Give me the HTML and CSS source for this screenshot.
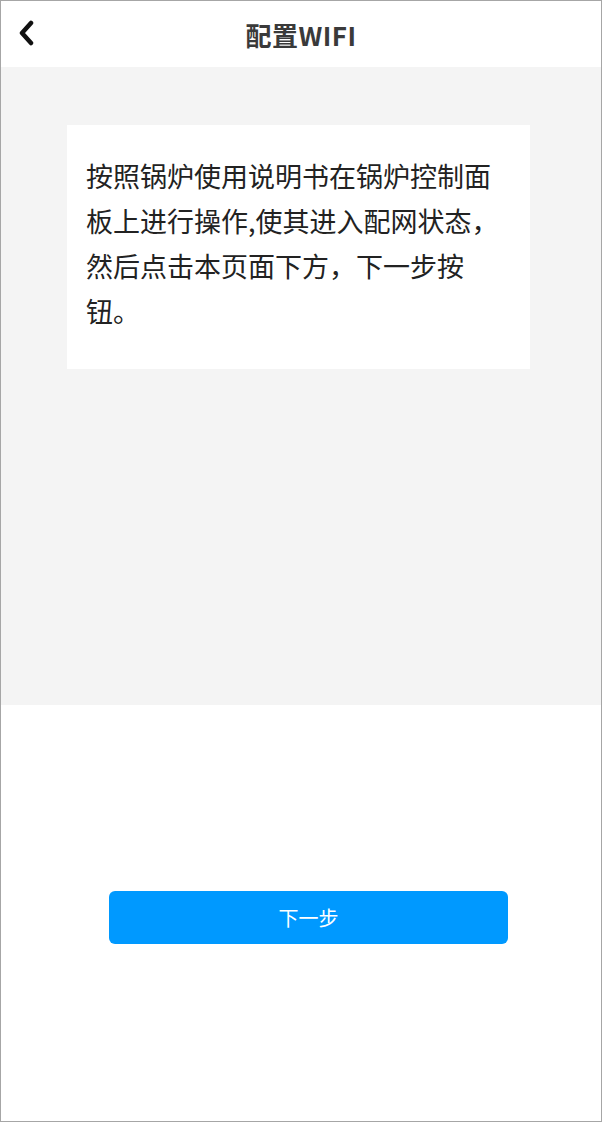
FILE: index.html
```html
<!DOCTYPE html>
<html lang="zh-CN">
<head>
  <meta charset="UTF-8"/>
  <meta name="viewport" content="width=device-width, initial-scale=1.0"/>
  <title>配置WIFI</title>
  <link rel="stylesheet" href="styles.css">
</head>
<body>
  <div class="page">
    <div class="header">
      <a class="back" href="#">
        <svg width="16" height="26" viewBox="0 0 16 26"><path d="M13 3 L4 13 L13 23" fill="none" stroke="#111" stroke-width="4.5" stroke-linecap="round" stroke-linejoin="round"/></svg>
      </a>
      <h1>配置WIFI</h1>
    </div>

    <div class="main">
      <div class="card">
        <p>按照锅炉使用说明书在锅炉控制面<br>板上进行操作,使其进入配网状态，<br>然后点击本页面下方，下一步按<br>钮。</p>
      </div>
    </div>

    <div class="footer">
      <button id="next">下一步</button>
    </div>
  </div>
</body>
</html>
```

FILE: styles.css
```css
body { margin:0; background:#fff; font-family:"Noto Sans CJK SC", "Microsoft YaHei", sans-serif; }
.page { box-sizing:border-box; width:602px; height:1122px; border:1px solid #a6a6a6; overflow:hidden; }
.header { position:relative; height:66px; display:flex; align-items:center; justify-content:center; background:#fff; }
.back { position:absolute; left:17px; top:19px; display:block; }
.header h1 { margin:0; font-size:26px; font-weight:bold; color:#3a3a3a; letter-spacing:0.5px; }
.main { height:638px; background:#f4f4f4; padding-top:58px; box-sizing:border-box; }
.card { margin-left:66px; width:463px; height:244px; background:#fff; box-sizing:border-box; padding:28px 19px 0; }
.card p { margin:0; font-size:27px; line-height:45px; color:#222; }
.footer { padding-top:186px; }
#next { display:block; margin-left:108px; width:399px; height:53px; border:none; border-radius:6px; background:#0099ff; color:#fff; font-family:inherit; font-size:20px; cursor:pointer; }
```
